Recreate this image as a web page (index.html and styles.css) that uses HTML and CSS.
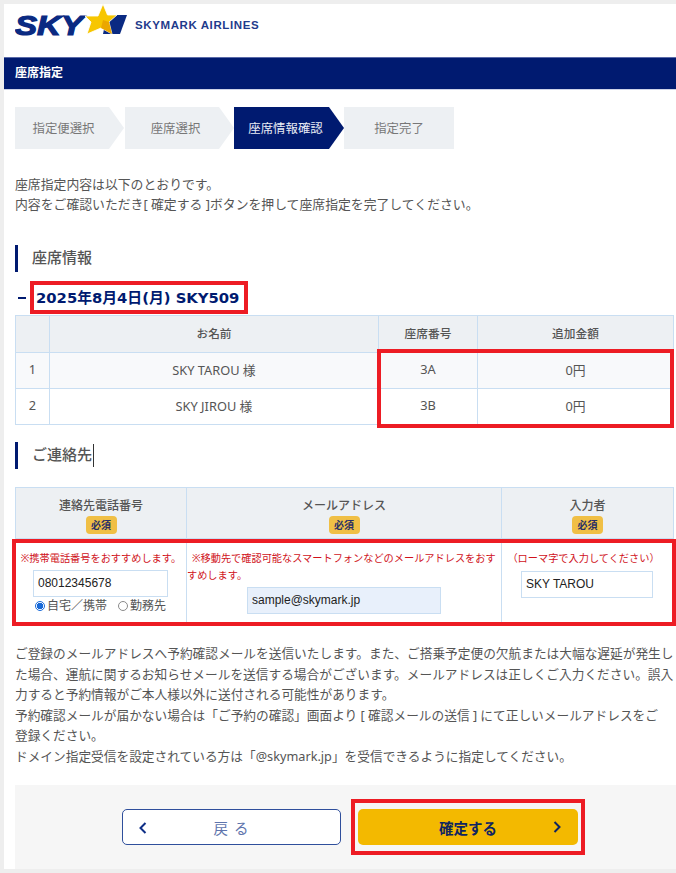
FILE: index.html
```html
<!DOCTYPE html>
<html lang="ja">
<head>
    <meta charset="UTF-8">
    <meta name="viewport" content="width=device-width, initial-scale=1.0">
    <title>座席指定</title>
    <link rel="stylesheet" href="styles.css">
</head>
<body>
    <div class="page">
        <header class="site-header">
            <svg class="logo" width="112" height="40" viewBox="0 0 112 40">
                <text x="0" y="31" class="logo-sky" textLength="68" lengthAdjust="spacingAndGlyphs">SKY</text>
                <polygon points="88,30 92,11 112,11 105,30" fill="#0a2a82"/>
                <polygon points="88,0 92.5,11 102,11 94,18 97,30 86,24 72,30 76,18 70,12 83,12" fill="#f7c600" stroke="#fff" stroke-width="0.8"/>
                <polygon points="86,24 97,30 94,18 88,16" fill="#eba700"/>
            </svg>
            <span class="brand">SKYMARK AIRLINES</span>
        </header>
        <div class="title-bar">座席指定</div>

        <div class="steps">
            <div class="step first">指定便選択</div>
            <div class="step second">座席選択</div>
            <div class="step current">座席情報確認</div>
            <div class="step last">指定完了</div>
        </div>

        <p class="lead">座席指定内容は以下のとおりです。<br>内容をご確認いただき[ 確定する ]ボタンを押して座席指定を完了してください。</p>

        <h2 class="section-title">座席情報</h2>
        <div class="flight">
            <span class="flight-dash"></span>
            <span class="flight-name">2025年8月4日(月) SKY509</span>
        </div>
        <div class="seat-wrap">
            <table class="info seats">
                <tr>
                    <th class="col-no"></th>
                    <th class="col-name">お名前</th>
                    <th class="col-seat">座席番号</th>
                    <th>追加金額</th>
                </tr>
                <tr class="odd">
                    <td>1</td>
                    <td>SKY TAROU 様</td>
                    <td>3A</td>
                    <td>0円</td>
                </tr>
                <tr>
                    <td>2</td>
                    <td>SKY JIROU 様</td>
                    <td>3B</td>
                    <td>0円</td>
                </tr>
            </table>
            <div class="mark mark-seats"></div>
        </div>

        <h2 class="section-title contact-title">ご連絡先<span class="caret"></span></h2>
        <div class="contact-wrap">
            <table class="info contact">
                <tr>
                    <th class="col-tel">連絡先電話番号<span class="required">必須</span></th>
                    <th class="col-mail">メールアドレス<span class="required">必須</span></th>
                    <th>入力者<span class="required">必須</span></th>
                </tr>
                <tr>
                    <td>
                        <div class="note">※携帯電話番号をおすすめします。</div>
                        <div class="field tel-field">08012345678</div>
                        <div class="radios">
                            <span class="radio on"></span>自宅／携帯
                            <span class="radio off"></span>勤務先
                        </div>
                    </td>
                    <td>
                        <div class="note mail-note">※移動先で確認可能なスマートフォンなどのメールアドレスをおすすめします。</div>
                        <div class="field mail-field">sample@skymark.jp</div>
                    </td>
                    <td>
                        <div class="note name-note">（ローマ字で入力してください）</div>
                        <div class="field name-field">SKY TAROU</div>
                    </td>
                </tr>
            </table>
            <div class="mark mark-contact"></div>
        </div>

        <p class="notice">ご登録のメールアドレスへ予約確認メールを送信いたします。また、ご搭乗予定便の欠航または大幅な遅延が発生した場合、運航に関するお知らせメールを送信する場合がございます。メールアドレスは正しくご入力ください。誤入力すると予約情報がご本人様以外に送付される可能性があります。<br>予約確認メールが届かない場合は「ご予約の確認」画面より [ 確認メールの送信 ] にて正しいメールアドレスをご<br>登録ください。<br>ドメイン指定受信を設定されている方は「@skymark.jp」を受信できるように指定してください。</p>

        <div class="actions">
            <a class="btn back">
                <svg class="chev" width="8" height="12" viewBox="0 0 8 12"><path d="M6.5 1 L1.5 6 L6.5 11" fill="none" stroke="#0f2f86" stroke-width="2"/></svg>
                戻 る
            </a>
            <div class="confirm-mark">
                <a class="btn confirm">
                    確定する
                    <svg class="chev" width="8" height="12" viewBox="0 0 8 12"><path d="M1.5 1 L6.5 6 L1.5 11" fill="none" stroke="#0f2560" stroke-width="2"/></svg>
                </a>
            </div>
        </div>
    </div>
</body>
</html>
```
FILE: styles.css
```css
body {
    margin: 0;
    background-color: #eeeeee;
    font-family: "Noto Sans", "Noto Sans CJK JP", sans-serif;
    font-size: 12.8px;
    color: #555555;
}
.page {
    margin: 4px 0 4px 4px;
    height: 865px;
    background-color: #ffffff;
    overflow: hidden;
}
.site-header {
    height: 53px;
    display: flex;
    align-items: flex-start;
    padding-left: 11px;
}
.logo {
    flex: none;
}
.logo-sky {
    font-family: "Liberation Sans", sans-serif;
    font-size: 28px;
    font-weight: bold;
    font-style: italic;
    fill: #0a2a82;
    stroke: #0a2a82;
    stroke-width: 1.2;
}
.brand {
    margin: 15px 0 0 8px;
    font-family: "Liberation Sans", sans-serif;
    font-size: 11.5px;
    font-weight: bold;
    letter-spacing: 0.6px;
    color: #1f3b8c;
}
.title-bar {
    height: 31px;
    line-height: 29px;
    padding-left: 11px;
    background-color: #001a70;
    border-top: 1px solid #5a6aa8;
    border-bottom: 1px solid #cdd3e8;
    color: #ffffff;
    font-size: 12px;
    font-weight: bold;
}
.steps {
    display: flex;
    margin: 17px 0 0 11px;
}
.step {
    width: 110px;
    height: 42px;
    line-height: 44px;
    box-sizing: border-box;
    background-color: #edf0f3;
    clip-path: polygon(0 0, 94px 0, 109px 50%, 94px 100%, 0 100%);
    color: #777777;
    font-size: 12.4px;
    text-align: center;
}
.step.first {
    padding-right: 13px;
}
.step.second {
    padding-right: 9px;
}
.step.current {
    margin-left: -1px;
    padding-right: 7px;
    background-color: #001a70;
    color: #e8ebf4;
    clip-path: polygon(0 0, 95px 0, 110px 50%, 95px 100%, 0 100%);
}
.step.last {
    clip-path: none;
}
.lead {
    margin: 25px 0 0 11px;
    font-size: 12.85px;
    line-height: 20px;
}
.section-title {
    position: relative;
    margin: 31px 0 0 11px;
    height: 27px;
    line-height: 24px;
    padding-left: 14px;
    border-left: 3px solid #001a70;
    font-size: 15px;
    font-weight: 500;
    color: #555555;
}
.caret {
    position: absolute;
    left: 75px;
    top: 2px;
    width: 1px;
    height: 23px;
    background-color: #333333;
}
.flight {
    display: flex;
    align-items: center;
    margin: 9px 0 1px 14px;
    height: 33px;
}
.flight-dash {
    width: 8px;
    height: 2px;
    margin-right: 4px;
    background-color: #001a70;
}
.flight-name {
    padding: 0 5px 0 2px;
    border: 4px solid #ed1c24;
    line-height: 25px;
    font-family: "DejaVu Sans", "Noto Sans CJK JP", sans-serif;
    font-size: 14.8px;
    font-weight: bold;
    color: #001a70;
}
.seat-wrap, .contact-wrap {
    position: relative;
    margin-left: 11px;
    width: 659px;
}
.info {
    width: 100%;
    border-collapse: collapse;
    table-layout: fixed;
}
.info th, .info td {
    padding: 0;
    border: 1px solid #c9def2;
    text-align: center;
    font-size: 12.8px;
    font-weight: normal;
}
.info th {
    background-color: #edf0f3;
    font-size: 11.7px;
    font-weight: 500;
}
.seats {
    height: 110px;
}
.seats tr:first-child {
    height: 37px;
}
.seats th {
    padding-bottom: 3px;
}
.seats td {
    padding-bottom: 3px;
}
.seats .odd td {
    background-color: #f8f9fb;
}
.col-no {
    width: 33px;
}
.col-name {
    width: 328px;
}
.col-seat {
    width: 98px;
}
.mark {
    position: absolute;
    box-sizing: border-box;
    border: 4px solid #ed1c24;
    pointer-events: none;
}
.mark-seats {
    left: 362px;
    top: 34px;
    width: 297px;
    height: 79px;
}
.contact-title {
    margin-top: 17px;
}
.contact-wrap {
    margin-top: 18px;
}
.info.contact th {
    height: 51px;
    font-size: 12px;
    vertical-align: top;
    padding-top: 8px;
    box-sizing: border-box;
}
.contact td {
    height: 85px;
    vertical-align: top;
}
.col-tel {
    width: 171px;
}
.col-mail {
    width: 315px;
}
.required {
    display: block;
    width: 31px;
    height: 18px;
    line-height: 18px;
    margin: 2px auto 0;
    border-radius: 4px;
    background-color: #f0bf45;
    color: #2a2f66;
    font-size: 10px;
    font-weight: bold;
}
.note {
    margin-top: 11px;
    font-size: 10.2px;
    line-height: 17px;
    color: #d0121b;
    white-space: nowrap;
}
.mail-note {
    white-space: normal;
    text-align: left;
    text-indent: 5px;
    line-height: 16.5px;
    margin-bottom: 2px;
}
.name-note {
    margin-right: 8px;
}
.field {
    box-sizing: border-box;
    height: 27px;
    line-height: 24px;
    border: 1px solid #c9def2;
    padding-left: 4px;
    background-color: #ffffff;
    font-family: "Liberation Sans", sans-serif;
    font-size: 12px;
    color: #222222;
    text-align: left;
}
.tel-field {
    width: 135px;
    margin: 3px 0 0 17px;
}
.mail-field {
    width: 194px;
    margin: 4px 0 0 60px;
    background-color: #e8f0fb;
}
.name-field {
    width: 132px;
    margin: 4px 0 0 19px;
}
.radios {
    display: flex;
    align-items: center;
    margin: 0 0 0 19px;
    font-size: 12px;
    line-height: 17px;
}
.radio {
    box-sizing: border-box;
    width: 10px;
    height: 10px;
    margin-right: 2px;
    border-radius: 50%;
}
.radio.on {
    border: 1px solid #1769d8;
    background: radial-gradient(circle, #1769d8 0 3px, #ffffff 3.5px);
}
.radio.off {
    margin-left: 11px;
    border: 1px solid #8a8a8a;
}
.mark-contact {
    left: -3px;
    top: 52px;
    width: 664px;
    height: 87px;
}
.notice {
    margin: 18px 0 0 11px;
    width: 660px;
    font-size: 12.7px;
    line-height: 20.5px;
}
.actions {
    display: flex;
    align-items: center;
    margin: 19px 0 0 11px;
    height: 84px;
    padding-left: 107px;
    background-color: #f6f6f6;
}
.btn {
    box-sizing: border-box;
    display: flex;
    align-items: center;
    justify-content: center;
    position: relative;
    width: 220px;
    height: 36px;
    border-radius: 5px;
    font-size: 14.5px;
}
.back {
    width: 219px;
    border: 1px solid #2f4f9c;
    background-color: #ffffff;
    color: #5f75ad;
    letter-spacing: 1px;
}
.confirm {
    background-color: #f3b900;
    color: #0f2560;
    font-weight: bold;
}
.chev {
    position: absolute;
    top: 12px;
}
.back .chev {
    left: 16px;
}
.confirm .chev {
    right: 17px;
}
.confirm-mark {
    margin-left: 10px;
    padding: 6px 3px;
    border: 4px solid #ed1c24;
    background-color: #f6f6f6;
}
```
